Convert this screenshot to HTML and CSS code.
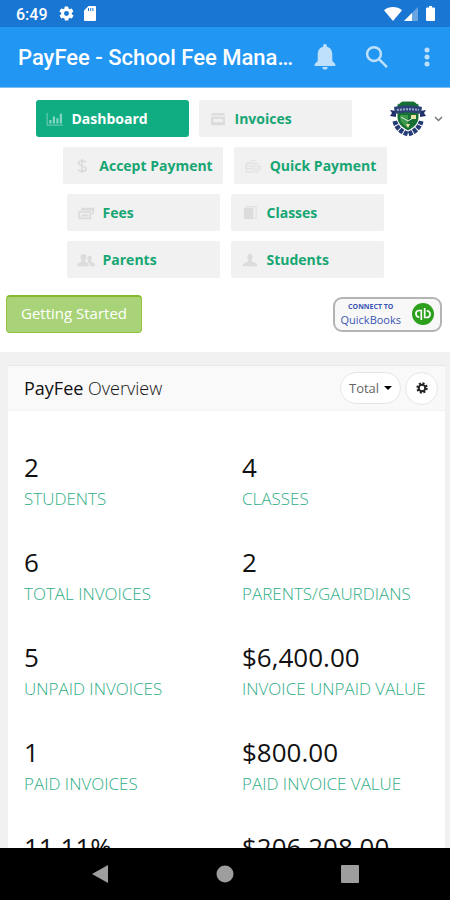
FILE: index.html
```html
<!DOCTYPE html>
<html lang="en">
<head>
<meta charset="utf-8">
<meta name="viewport" content="width=device-width, initial-scale=1">
<title>PayFee - School Fee Management</title>
<link rel="stylesheet" href="styles.css">
</head>
<body>
<div class="statusbar">
  <span class="clock">6:49</span>
  <svg class="status-gear" viewBox="0 0 24 24" width="17" height="17"><path d="M19.4 13c0-.3.1-.6.1-1s0-.7-.1-1l2.1-1.600c.2-.2.200-.4.100-.6l-2-3.500c-.1-.2-.4-.3-.6-.2l-2.500 1c-.5-.4-1.100-.7-1.700-1l-.4-2.600c0-.2-.2-.4-.5-.4h-4c-.2 0-.5.2-.5.4l-.4 2.600c-.6.3-1.200.6-1.700 1l-2.500-1c-.2-.1-.5 0-.6.200l-2 3.500c-.1.200-.1.500.1.600L4.600 11c0 .3-.1.600-.1 1s0 .7.1 1l-2.100 1.600c-.2.200-.2.400-.1.600l2 3.500c.1.200.4.300.6.200l2.500-1c.5.4 1.100.7 1.700 1l.4 2.600c0 .2.200.4.500.4h4c.2 0 .5-.2.500-.4l.4-2.600c.6-.3 1.200-.6 1.700-1l2.500 1c.2.100.5 0 .6-.2l2-3.500c.1-.2.100-.5-.1-.6zM12 15.500a3.500 3.500 0 1 1 0-7 3.500 3.500 0 0 1 0 7z"/></svg>
  <svg class="status-card" viewBox="0 0 12 15" width="12" height="15"><path d="M4.500 0H11a1 1 0 0 1 1 1v13a1 1 0 0 1-1 1H1a1 1 0 0 1-1-1V4.500z"/><path class="slot" d="M4.500 2v3M6.700 2v3M8.900 2v3"/></svg>
  <span class="status-right">
    <svg viewBox="0 0 18 14" width="18" height="14"><path d="M0 3.200C5-1 13-1 18 3.200L9 14z"/></svg>
    <svg viewBox="0 0 14 14" width="14" height="14"><path d="M14 0v14H0z" opacity=".35"/><path d="M8 6v8H0z"/></svg>
    <svg class="battery" viewBox="0 0 9 15" width="9" height="15"><path d="M3 0h3v1.500h2a1 1 0 0 1 1 1V14a1 1 0 0 1-1 1H1a1 1 0 0 1-1-1V2.500a1 1 0 0 1 1-1h2z"/></svg>
  </span>
</div>
<header class="appbar">
  <h1 class="app-title">PayFee - School Fee Mana…</h1>
  <div class="app-actions">
    <button type="button" aria-label="Notifications"><svg viewBox="0 0 22 26" width="22" height="26"><path d="M11 0c1.200 0 1.900.8 1.900 1.900v.8c3.600.9 5.400 4 5.400 7.400v6.900l3 3V22H.7v-2l3-3v-6.900c0-3.400 1.800-6.500 5.400-7.400v-.8C9.100.8 9.800 0 11 0zM8.300 23h5.400c0 1.600-1.100 2.600-2.700 2.600S8.300 24.600 8.300 23z"/></svg></button>
    <button type="button" aria-label="Search"><svg viewBox="0 0 24 24" width="24" height="24"><path class="line" d="M9 2.200a6.900 6.900 0 1 1 0 13.800A6.900 6.900 0 0 1 9 2.200zM14 14.100l8 8"/></svg></button>
    <button type="button" aria-label="More options"><svg viewBox="0 0 6 20" width="6" height="20"><circle cx="3" cy="3" r="2.500"/><circle cx="3" cy="10" r="2.500"/><circle cx="3" cy="17" r="2.500"/></svg></button>
  </div>
</header>
<main class="content">
  <section class="top">
    <nav class="menu">
      <div class="menu-row first">
        <div class="menu-pair">
          <a class="menu-item active" href="#"><svg viewBox="0 0 20 16" width="18" height="14"><path class="stroke" d="M1 1v14h18"/><path d="M3.500 9H6v4H3.500zM7.500 5H10v8H7.500zM11.500 7H14v6h-2.500zM15.500 2H18v11h-2.500z"/></svg>Dashboard</a>
          <a class="menu-item" href="#"><svg viewBox="0 0 20 16" width="18" height="14"><path d="M3 1h14l1 3H2zM2 5.500h16V15H2zM4.500 8v3.500h11V8z" fill-rule="evenodd"/></svg>Invoices</a>
        </div>
        <button class="account" type="button" aria-label="Account">
          <svg viewBox="0 0 38 38" width="38" height="38">
            <path fill="none" stroke="#243b78" stroke-width="5" stroke-dasharray="4 1" d="M6 21c1 6 6 11 13 13 7-2 12-7 13-13"/>
            <path fill="#176f35" stroke="#fff" stroke-width="1" d="M8 4c3 0 4-3 6-3h10c2 0 3 3 6 3v13c0 6-4 10-11 14C12 27 8 23 8 17z"/>
            <path fill="#3c9a4a" d="M11 15h8v13c-5-3-8-6-8-11z"/>
            <path fill="#ede4a0" d="M22 15h5v4h-5zM17 24h4l-2 4z"/>
            <path fill="none" stroke="#d8ecd9" stroke-width="1" d="M12 17l7 4 5-3"/>
            <path fill="#1f3069" d="M1 10l6 1v6l-6-1 2-3zM37 10l-6 1v6l6-1-2-3z"/>
            <path fill="#2d4279" d="M5 7c9-2 19-2 28 0l-1 7c-9-2-17-2-26 0z"/>
            <path fill="none" stroke="#9daac6" stroke-width="2" stroke-dasharray="2 1" d="M8 10c7-1 15-1 22 0"/>
          </svg>
          <svg class="chevron" viewBox="0 0 9 6" width="9" height="6"><path d="M1 1l3.500 3.500L8 1"/></svg>
        </button>
      </div>
      <div class="menu-row">
        <a class="menu-item" href="#"><svg viewBox="0 0 20 16" width="18" height="14"><path class="stroke thick" d="M14.500 4C13.500 2 6 1 6 4.700 6 9 14.500 7 14.500 11.300 14.500 15 6.500 14.500 5.500 12M10 0v16"/></svg>Accept Payment</a>
        <a class="menu-item" href="#"><svg viewBox="0 0 20 16" width="18" height="14"><path class="stroke" d="M4 5l7-4 3 3M2 5h10M2 5v10h8M2 8h6M2 11h6"/><circle class="stroke" cx="13.500" cy="10" r="5"/><path class="stroke" d="M11 8h5v4h-5z"/></svg>Quick Payment</a>
      </div>
      <div class="menu-row">
        <a class="menu-item" href="#"><svg viewBox="0 0 20 16" width="18" height="14"><path d="M5 2h15l-1.500 8H17V5H4zM1 6h15v9H1zM3 8v5h11V8z" fill-rule="evenodd"/><path d="M4 11l4-2 5 1v2H4z"/></svg>Fees</a>
        <a class="menu-item" href="#"><svg viewBox="0 0 20 16" width="18" height="14"><path d="M3 2h11v13H3z"/><path class="stroke" d="M5 .7h12V14h-2"/></svg>Classes</a>
      </div>
      <div class="menu-row">
        <a class="menu-item" href="#"><svg viewBox="0 0 20 16" width="18" height="14"><path d="M7 1c2.500 0 3.500 2 3 4.500-.2 1.500-1 2-1 3.500 0 1.500 4 2 4 4v2H0v-2c0-2 5-2.500 5-4 0-1.500-.8-2-1-3.500C3.500 3 4.500 1 7 1z"/><path d="M14 3c2 0 3 1.600 2.600 3.500-.2 1.400-1 1.700-1 3 0 1.300 4.400 1.500 4.400 3.500v2h-5.500c0-3-1-3.500-3-4.500 1.500-1 .5-2 .2-3.500C11.300 4.600 12 3 14 3z"/></svg>Parents</a>
        <a class="menu-item" href="#"><svg viewBox="0 0 20 16" width="18" height="14"><path d="M10 1c2.500 0 3.500 2 3 4.500-.2 1.500-1 2-1 3.500 0 1.500 6 2 6 4v2H2v-2c0-2 6-2.500 6-4 0-1.500-.8-2-1-3.500C6.500 3 7.500 1 10 1z"/></svg>Students</a>
      </div>
    </nav>
    <div class="links">
      <button class="start" type="button">Getting Started</button>
      <button class="quickbooks" type="button">
        <span class="qb-text"><span class="qb-small">CONNECT TO</span><span class="qb-name">QuickBooks</span></span>
        <svg viewBox="0 0 22 22" width="22" height="22"><circle cx="11" cy="11" r="11" fill="#2ca01c"/><path fill="none" stroke="#fff" stroke-width="1.700" d="M9.300 14V7.500H7.200a3.300 3.300 0 0 0 0 6.600M9.300 12v5M12.700 8v6.500h2.100a3.300 3.300 0 0 0 0-6.600M12.700 10V5"/></svg>
      </button>
    </div>
  </section>
  <section class="panel">
    <div class="panel-head">
      <h2><strong>PayFee</strong> Overview</h2>
      <div class="period">
        <select aria-label="Period"><option>Total</option></select>
        <svg viewBox="0 0 8 4" width="8" height="4"><path d="M0 0h8L4 4z"/></svg>
      </div>
      <button class="settings" type="button" aria-label="Settings"><svg viewBox="0 0 12 12" width="12" height="12"><circle class="teeth" cx="6" cy="6" r="4.700"/><circle class="ring" cx="6" cy="6" r="3.300"/></svg></button>
    </div>
    <dl class="stats">
      <div><dd>2</dd><dt>STUDENTS</dt></div>
      <div><dd>4</dd><dt>CLASSES</dt></div>
      <div><dd>6</dd><dt>TOTAL INVOICES</dt></div>
      <div><dd>2</dd><dt>PARENTS/GAURDIANS</dt></div>
      <div><dd>5</dd><dt>UNPAID INVOICES</dt></div>
      <div><dd>$6,400.00</dd><dt>INVOICE UNPAID VALUE</dt></div>
      <div><dd>1</dd><dt>PAID INVOICES</dt></div>
      <div><dd>$800.00</dd><dt>PAID INVOICE VALUE</dt></div>
      <div><dd>11.11%</dd></div>
      <div><dd>$206,208.00</dd></div>
    </dl>
  </section>
</main>
<footer class="navbar">
  <button type="button" aria-label="Back"><svg viewBox="0 0 18 18" width="18" height="18"><path d="M17 0v18L1 9z"/></svg></button>
  <button type="button" aria-label="Home"><svg viewBox="0 0 18 18" width="18" height="18"><circle cx="9" cy="9" r="8.500"/></svg></button>
  <button type="button" aria-label="Recent apps"><svg viewBox="0 0 18 18" width="18" height="18"><rect width="18" height="18" rx="1"/></svg></button>
</footer>
</body>
</html>
```
FILE: styles.css
```css
* {
  box-sizing: border-box;
}

body {
  margin: 0;
  height: 100vh;
  display: flex;
  flex-direction: column;
  overflow: hidden;
  background: #f1f1f1;
  font-family: "Open Sans", sans-serif;
  color: #111;
}

button {
  border: 0;
  padding: 0;
  background: none;
  font-family: inherit;
  display: flex;
  align-items: center;
  justify-content: center;
}

svg {
  display: block;
  flex: none;
}

.statusbar {
  flex: none;
  height: 27px;
  padding: 0 15px 0 16px;
  display: flex;
  align-items: center;
  background: #1976d2;
  color: #fff;
  font: 500 16px/27px Roboto, sans-serif;
}

.statusbar svg {
  fill: #fff;
}

.clock {
  padding-top: 2px;
  margin-right: 10px;
}

.status-card {
  margin-left: 9px;
}

.slot {
  stroke: #1976d2;
  stroke-width: 1;
}

.status-right {
  margin-left: auto;
  display: flex;
  align-items: center;
  gap: 2px;
}

.battery {
  margin-left: 6px;
}

.appbar {
  flex: none;
  height: 61px;
  padding: 0 20px 0 18px;
  display: flex;
  align-items: center;
  justify-content: space-between;
  background: #2196f3;
  border-bottom: 1px solid #7fbdf0;
}

.app-title {
  margin: 0;
  padding-top: 2px;
  color: #fff;
  font: 500 22px/30px Roboto, sans-serif;
  white-space: nowrap;
}

.app-actions {
  display: flex;
  align-items: center;
  gap: 29px;
}

.app-actions button + button + button {
  margin-left: 6px;
}

.app-actions svg {
  fill: #bfe0fc;
}

.app-actions .line {
  fill: none;
  stroke: #bfe0fc;
  stroke-width: 2.500;
}

.content {
  flex: 1;
  min-height: 0;
  overflow: hidden;
}

.top {
  background: #fff;
  padding: 12px 0 19px;
}

.menu {
  display: flex;
  flex-direction: column;
  gap: 10px;
}

.menu-row {
  display: flex;
  justify-content: center;
  gap: 11px;
}

.menu-row.first {
  padding-left: 10px;
}

.menu-pair {
  flex: 1;
  display: flex;
  justify-content: center;
  gap: 10px;
}

.menu-item {
  min-width: 153px;
  height: 37px;
  padding: 0 10px;
  display: flex;
  align-items: center;
  gap: 8px;
  border-radius: 2px;
  background: #f1f1f1;
  color: #17a673;
  font-size: 14px;
  font-weight: 700;
  text-decoration: none;
}

.menu-item svg {
  fill: #dcdcdc;
}

.menu-item .stroke {
  fill: none;
  stroke: #dcdcdc;
  stroke-width: 1;
}

.menu-item .thick {
  stroke-width: 2;
}

.menu-item.active {
  background: #10ad83;
  color: #fff;
  border-radius: 3px;
}

.menu-item.active svg {
  fill: #83d5be;
}

.menu-item.active .stroke {
  stroke: #83d5be;
}

.account {
  flex: none;
  width: 62px;
  height: 37px;
  padding-right: 6px;
  gap: 7px;
}

.chevron path {
  fill: none;
  stroke: #777;
  stroke-width: 1.500;
}

.links {
  margin-top: 17px;
  padding: 0 8px 0 6px;
  display: flex;
  align-items: center;
  justify-content: space-between;
}

.start {
  height: 38px;
  padding: 0 14px 4px;
  border: 1px solid #93c23f;
  border-top: 2px solid #87b92d;
  border-radius: 4px;
  background: #a9d378;
  color: #fff;
  font-size: 15px;
}

.quickbooks {
  height: 35px;
  padding: 0 6px;
  gap: 11px;
  border: 2px solid #b4b4b4;
  border-radius: 9px;
  background: #f8f8f8;
}

.qb-text {
  display: flex;
  flex-direction: column;
  align-items: center;
  color: #3a54b4;
}

.qb-small {
  font-size: 7px;
  line-height: 10px;
  font-weight: 700;
}

.qb-name {
  font-size: 11px;
  line-height: 15px;
}

.panel {
  margin: 13px 5px 0 8px;
  background: #fff;
  border-top: 1px solid #e8e8e8;
}

.panel-head {
  height: 45px;
  padding: 0 7px 0 16px;
  display: flex;
  align-items: center;
  gap: 4px;
  background: #f9f9f9;
  border-bottom: 1px solid #f3f3f3;
}

.panel-head h2 {
  flex: 1;
  margin: 0;
  font-size: 18px;
  font-weight: 300;
}

.panel-head strong {
  font-weight: 500;
}

.period {
  position: relative;
}

.period select {
  appearance: none;
  width: 61px;
  height: 32px;
  padding: 0 0 0 8px;
  border: 1px solid #e6e6e6;
  border-radius: 16px;
  background: #fff;
  color: #666;
  font: 13px "Open Sans", sans-serif;
}

.period svg {
  position: absolute;
  right: 9px;
  top: 14px;
  pointer-events: none;
}

.settings {
  width: 33px;
  height: 33px;
  border: 1px solid #e6e6e6;
  border-radius: 50%;
  background: #fff;
}

.settings circle {
  fill: none;
  stroke: #222;
  stroke-width: 2;
}

.settings .teeth {
  stroke-dasharray: 2 1.690;
}

.stats {
  margin: 0;
  padding: 40px 0 0 16px;
  display: grid;
  grid-template-columns: 1fr 203px;
  row-gap: 34px;
}

.stats dd {
  margin: 0 0 3px;
  font-size: 26px;
  line-height: 32px;
}

.stats dt {
  font-size: 17px;
  line-height: 26px;
  font-weight: 300;
  color: #2fae86;
  white-space: nowrap;
}

.navbar {
  flex: none;
  height: 52px;
  display: flex;
  align-items: center;
  justify-content: center;
  gap: 107px;
  background: #000;
}

.navbar svg {
  fill: #9e9e9e;
}
```
